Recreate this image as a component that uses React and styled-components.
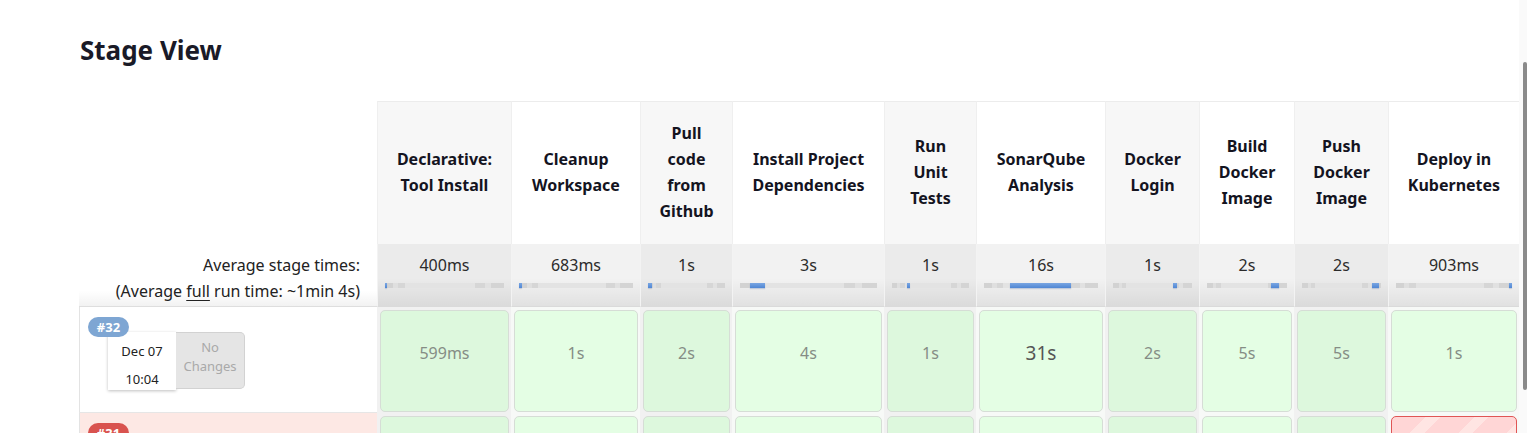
import React from 'react';
import styled, {createGlobalStyle, css} from 'styled-components';

const GlobalStyle = createGlobalStyle`
  html, body {
    margin: 0;
    padding: 0;
    background: #fff;
    overflow: hidden;
  }
  body {
    font-family: "Noto Sans", "Open Sans", sans-serif;
    color: #1b1b28;
  }
`;

const COLS = '298px 134px 129px 92px 152px 92px 129px 94px 95px 94px 131px';

const stages = [
    {name: ['Declarative:', 'Tool Install'], avg: '400ms', bar: [0, 2]},
    {name: ['Cleanup', 'Workspace'], avg: '683ms', bar: [0, 3]},
    {name: ['Pull', 'code', 'from', 'Github'], avg: '1s', bar: [0, 5]},
    {name: ['Install Project', 'Dependencies'], avg: '3s', bar: [7.5, 11]},
    {name: ['Run', 'Unit', 'Tests'], avg: '1s', bar: [19, 4]},
    {name: ['SonarQube', 'Analysis'], avg: '16s', bar: [23, 53]},
    {name: ['Docker', 'Login'], avg: '1s', bar: [76, 5]},
    {name: ['Build', 'Docker', 'Image'], avg: '2s', bar: [80, 10.5]},
    {name: ['Push', 'Docker', 'Image'], avg: '2s', bar: [89, 8]},
    {name: ['Deploy in', 'Kubernetes'], avg: '903ms', bar: [97, 3]},
];

// second build is cut off by the frame, only its badge is readable
const builds = [
    {
        id: 32, date: 'Dec 07', time: '10:04', failed: false,
        cells: ['599ms', '1s', '2s', '4s', '1s', '31s', '2s', '5s', '5s', '1s'],
        big: 5,
    },
    {
        id: 31, failed: true,
        cells: ['', '', '', '', '', '', '', '', '', ''],
        failedAt: 9,
    },
];

const Page = styled.div`
  padding: 33px 0 0 79px;
`;

const Title = styled.h2`
  margin: 0 0 34px 1px;
  font-size: 26px;
  line-height: 34px;
  font-weight: 700;
  color: #1a1a27;
`;

const Row = styled.div`
  display: grid;
  grid-template-columns: ${COLS};
`;

const HeadLabel = styled.div`
  background: #fff;
`;

const HeadCell = styled.div`
  display: flex;
  flex-direction: column;
  align-items: center;
  justify-content: center;
  height: 143px;
  box-sizing: border-box;
  border-top: 1px solid #ececec;
  border-left: 1px solid #efefef;
  background: ${p => (p.$stripe ? '#f7f7f7' : '#fff')};
  font-size: 16px;
  font-weight: 700;
  line-height: 26px;
  text-align: center;
  color: #14141f;
  padding-bottom: 3px;
`;

const AvgLabel = styled.div`
  height: 63px;
  box-sizing: border-box;
  padding: 8px 17px 0 0;
  text-align: right;
  font-size: 16px;
  line-height: 26px;
  color: #222;
  background: linear-gradient(to bottom, rgba(0, 0, 0, 0) 75%, rgba(0, 0, 0, 0.05) 100%);
  border-bottom: 1px solid #dedede;

  u {
    text-decoration: underline;
    text-underline-offset: 3px;
  }
`;

const AvgCell = styled.div`
  height: 63px;
  box-sizing: border-box;
  padding: 10px 7px 0 7px;
  text-align: center;
  font-size: 16px;
  line-height: 22px;
  color: #2b2b2b;
  border-left: 1px solid #f3f3f3;
  border-bottom: 1px solid #dadada;
  background-color: ${p => (p.$stripe ? '#ebebeb' : '#f2f2f2')};
  background-image: linear-gradient(to bottom, rgba(0, 0, 0, 0) 55%, rgba(0, 0, 0, 0.07) 100%);
`;

const Track = styled.div`
  position: relative;
  height: 5px;
  margin-top: 7px;
  background: linear-gradient(90deg,
    #d2d2d2 0 7%, #dfdfdf 7% 11%, #d6d6d6 11% 17%, #e3e3e3 17% 76%,
    #d6d6d6 76% 84%, #e1e1e1 84% 89%, #d4d4d4 89% 100%);
  filter: blur(0.4px);
`;

const Fill = styled.div`
  position: absolute;
  top: 0;
  bottom: 0;
  background: linear-gradient(to bottom, #7aa6e2, #4f86d4);
  box-shadow: 0 1px 1px rgba(60, 100, 170, 0.25);
`;

const BuildCell = styled.div`
  position: relative;
  display: flex;
  align-items: flex-start;
  box-sizing: border-box;
  height: 106px;
  padding: 25px 0 0 28px;
  border-left: 1px solid #e3e3e3;
  border-bottom: 1px solid #e6e6e6;
  background: ${p => (p.$failed ? '#fde8e4' : '#fff')};
`;

const Badge = styled.span`
  position: absolute;
  left: 8px;
  top: 10px;
  width: 41px;
  height: 20px;
  border-radius: 10px;
  background: ${p => (p.$failed ? '#d9534f' : '#7ea6d3')};
  color: #fff;
  font-size: 13px;
  font-weight: 700;
  line-height: 20px;
  text-align: center;
  z-index: 2;
`;

const DateBox = styled.div`
  width: 68px;
  height: 58px;
  box-sizing: border-box;
  padding-top: 5px;
  background: #fff;
  box-shadow: 0 1px 3px rgba(0, 0, 0, 0.25);
  font-size: 13px;
  line-height: 28px;
  text-align: center;
  color: #222;
`;

const ChangesBox = styled.div`
  width: 69px;
  height: 57px;
  box-sizing: border-box;
  padding-top: 5px;
  background: #e5e5e5;
  border: 1px solid #d2d2d2;
  border-left: none;
  border-radius: 0 5px 5px 0;
  font-size: 13px;
  line-height: 19px;
  text-align: center;
  color: #a9a9a9;
`;

const StageCol = styled.div`
  box-sizing: border-box;
  height: 106px;
  padding: 3px 2px 1px 3px;
  background: ${p => (p.$stripe ? '#f1f1f1' : '#f7f9f7')};
`;

const failedStripes = css`
  border: 1px solid #e05555;
  background: repeating-linear-gradient(135deg,
    #ffd6d6 0 24px, #ffe5e3 24px 34px);
`;

const StageBox = styled.div`
  display: flex;
  align-items: center;
  justify-content: center;
  height: 102px;
  box-sizing: border-box;
  padding-bottom: 17px;
  border: 1px solid #d6ddd6;
  border-radius: 5px;
  background: ${p => (p.$stripe ? '#ddf8dd' : '#e4fee4')};
  font-size: ${p => (p.$big ? '19px' : '16px')};
  color: ${p => (p.$big ? '#555' : '#858d85')};
  ${p => p.$failed && failedStripes};
`;

const ScrollTrack = styled.div`
  position: fixed;
  top: 0;
  right: 0;
  bottom: 0;
  width: 8px;
  background: #fafafa;
`;

const ScrollThumb = styled.div`
  position: absolute;
  top: 62px;
  right: 0;
  width: 4px;
  height: 328px;
  border-radius: 3px;
  background: #8a8a8a;
`;

function StageHeader() {
    return (
        <Row>
            <HeadLabel/>
            {stages.map((s, i) => (
                <HeadCell key={i} $stripe={i % 2 === 0}>
                    {s.name.map(l => <span key={l}>{l}</span>)}
                </HeadCell>
            ))}
        </Row>
    );
}

function AverageRow() {
    return (
        <Row>
            <AvgLabel>
                Average stage times:<br/>
                (Average <u>full</u> run time: ~1min 4s)
            </AvgLabel>
            {stages.map((s, i) => (
                <AvgCell key={i} $stripe={i % 2 === 0}>
                    {s.avg}
                    <Track>
                        <Fill style={{left: `${s.bar[0]}%`, width: `${s.bar[1]}%`}}/>
                    </Track>
                </AvgCell>
            ))}
        </Row>
    );
}

function BuildRow({build}) {
    return (
        <Row>
            <BuildCell $failed={build.failed}>
                <Badge $failed={build.failed}>#{build.id}</Badge>
                {build.date && (
                    <>
                        <DateBox>{build.date}<br/>{build.time}</DateBox>
                        <ChangesBox>No<br/>Changes</ChangesBox>
                    </>
                )}
            </BuildCell>
            {build.cells.map((c, i) => (
                <StageCol key={i} $stripe={i % 2 === 0}>
                    <StageBox $stripe={i % 2 === 0} $big={build.big === i} $failed={build.failedAt === i}>
                        {c}
                    </StageBox>
                </StageCol>
            ))}
        </Row>
    );
}

export default function App() {
    return (
        <>
            <GlobalStyle/>
            <Page>
                <Title>Stage View</Title>
                <StageHeader/>
                <AverageRow/>
                {builds.map(b => <BuildRow key={b.id} build={b}/>)}
            </Page>
            <ScrollTrack>
                <ScrollThumb/>
            </ScrollTrack>
        </>
    );
}
